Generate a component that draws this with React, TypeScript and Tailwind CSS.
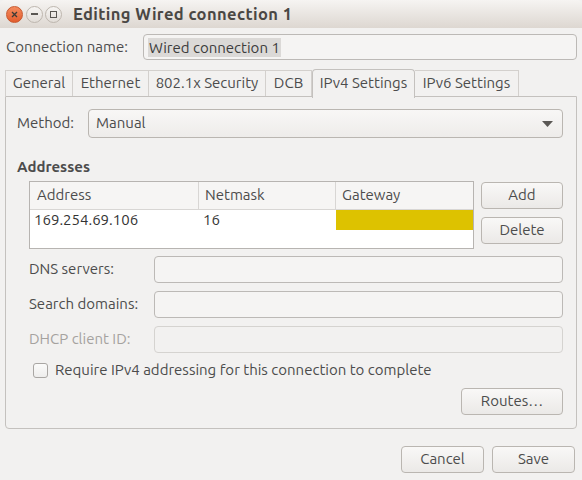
import React from 'react'

const FONT = "font-['Ubuntu','Noto_Sans',sans-serif]"

function Button({ label, className = '' }: { label: string; className?: string }) {
  return (
    <div
      className={`flex items-center justify-center rounded-[4px] border border-[#bab6b1] bg-gradient-to-b from-[#f9f8f7] to-[#ebe9e7] text-[#4c4c4c] ${className}`}
    >
      {label}
    </div>
  )
}

function Field({ label, disabled = false }: { label: string; disabled?: boolean }) {
  return (
    <div className="flex h-[27px] items-center">
      <div className={`w-[125px] ${disabled ? 'text-[#a5a29f]' : ''}`}>{label}</div>
      <div
        className={`h-full flex-1 rounded-[4px] border ${
          disabled ? 'border-[#d5d3d0] bg-[#f2f1f0]' : 'border-[#bcb9b6] bg-[#f5f4f3]'
        }`}
      />
    </div>
  )
}

const tabs = [
  { name: 'General', w: 'w-[67px]' },
  { name: 'Ethernet', w: 'w-[76px]' },
  { name: '802.1x Security', w: 'w-[117px]' },
  { name: 'DCB', w: 'w-[46px]' },
]

export default function App() {
  return (
    <div className={`flex h-[480px] w-[582px] flex-col bg-[#f2f1f0] text-[15px] text-[#4c4c4c] ${FONT}`}>
      {/* title bar */}
      <div className="flex h-[28px] items-center rounded-t-[5px] bg-gradient-to-b from-[#f6f4f2] to-[#ddd7d1] pl-[6px]">
        <div className="flex h-[17px] w-[17px] items-center justify-center rounded-full border border-[#c7582e] bg-gradient-to-b from-[#f48a5c] to-[#e35c2c]">
          <svg width="7" height="7" viewBox="0 0 7 7">
            <path d="M1 1 L6 6 M6 1 L1 6" stroke="#3c3b37" strokeWidth="1.3" />
          </svg>
        </div>
        <div className="ml-[3px] flex h-[17px] w-[17px] items-center justify-center rounded-full border border-[#bdb6ae] bg-gradient-to-b from-[#f7f5f3] to-[#e2ddd8]">
          <div className="h-[1.5px] w-[7px] bg-[#5a5753]" />
        </div>
        <div className="ml-[2px] flex h-[17px] w-[17px] items-center justify-center rounded-full border border-[#bdb6ae] bg-gradient-to-b from-[#f7f5f3] to-[#e2ddd8]">
          <div className="h-[7px] w-[7px] border-[1.3px] border-[#5a5753]" />
        </div>
        <div className="ml-[11px] text-[16.5px] font-bold tracking-[0.4px] text-[#4a4744]">Editing Wired connection 1</div>
      </div>

      <div className="flex flex-1 flex-col px-[5px]">
        {/* connection name */}
        <div className="mt-[6px] flex h-[26px] items-center">
          <div className="w-[138px] pl-[1px]">Connection name:</div>
          <div className="flex h-full flex-1 items-center rounded-[4px] border border-[#bcb9b6] bg-[#f5f4f3] pl-[4px]">
            <span className="bg-[#dbd9d7] px-[1px] leading-[19px] text-[#3c3c3c]">Wired connection 1</span>
          </div>
        </div>

        {/* tabs */}
        <div className="relative z-10 mt-[7px] flex h-[29px] items-end">
          <div className="flex h-[26px] border-l border-t border-[#d3d0cd] pl-0">
            {tabs.map((t) => (
              <div key={t.name} className={`flex items-center justify-center border-r border-[#d3d0cd] ${t.w}`}>
                {t.name}
              </div>
            ))}
          </div>
          <div className="-mb-[2px] flex h-[29px] w-[103px] items-center justify-center rounded-t-[4px] border border-b-0 border-[#c4c1be] bg-[#f2f1f0] pb-[2px]">
            IPv4 Settings
          </div>
          <div className="flex h-[26px] w-[104px] items-center justify-center border-r border-t border-[#d3d0cd]">
            IPv6 Settings
          </div>
        </div>

        {/* panel */}
        <div className="flex h-[333px] flex-col rounded-b-[4px] border border-[#c4c1be] pl-[11px] pr-[13px]">
          <div className="mt-[12px] flex h-[29px] items-center">
            <div className="w-[71px]">Method:</div>
            <div className="flex h-full flex-1 items-center justify-between rounded-[4px] border border-[#bab6b1] bg-gradient-to-b from-[#f8f7f6] to-[#eeecea] pl-[7px] pr-[9px]">
              <span>Manual</span>
              <svg width="11" height="6" viewBox="0 0 11 6">
                <path d="M0 0 L11 0 L5.5 6 Z" fill="#5b5855" />
              </svg>
            </div>
          </div>

          <div className="mt-[20px] font-bold leading-[17px]">Addresses</div>

          <div className="ml-[12px] mt-[6px] flex">
            <div className="h-[68px] w-[445px] border border-[#b7b4b1] bg-white">
              <div className="flex h-[28px] border-b border-[#d8d6d4] bg-[#f6f5f4]">
                <div className="flex w-[169px] items-center border-r border-[#d8d6d4] pl-[7px]">Address</div>
                <div className="flex w-[137px] items-center border-r border-[#d8d6d4] pl-[6px]">Netmask</div>
                <div className="flex flex-1 items-center pl-[6px]">Gateway</div>
              </div>
              <div className="flex h-[20px] text-[#333333]">
                <div className="flex w-[169px] items-center pl-[4px]">169.254.69.106</div>
                <div className="flex w-[137px] items-center pl-[4px]">16</div>
                <div className="flex-1 bg-[#ddc200]" />
              </div>
            </div>
            <div className="ml-[7px] flex flex-1 flex-col">
              <Button label="Add" className="mt-[1px] h-[27px]" />
              <Button label="Delete" className="mt-[8px] h-[27px]" />
            </div>
          </div>

          <div className="ml-[12px] mt-[7px] flex flex-col gap-[8px]">
            <Field label="DNS servers:" />
            <Field label="Search domains:" />
            <Field label="DHCP client ID:" disabled />
          </div>

          <div className="ml-[16px] mt-[9px] flex h-[17px] items-center">
            <div className="h-[15px] w-[15px] rounded-[3px] border border-[#a9a6a3] bg-gradient-to-b from-[#fbfbfa] to-[#eeedec]" />
            <span className="ml-[7px]">Require IPv4 addressing for this connection to complete</span>
          </div>

          <div className="mt-[9px] flex justify-end">
            <Button label="Routes…" className="h-[27px] w-[102px]" />
          </div>
        </div>

        {/* footer */}
        <div className="mt-[17px] flex justify-end gap-[8px] pr-[2px]">
          <Button label="Cancel" className="h-[27px] w-[83px]" />
          <Button label="Save" className="h-[27px] w-[83px]" />
        </div>
      </div>
    </div>
  )
}
